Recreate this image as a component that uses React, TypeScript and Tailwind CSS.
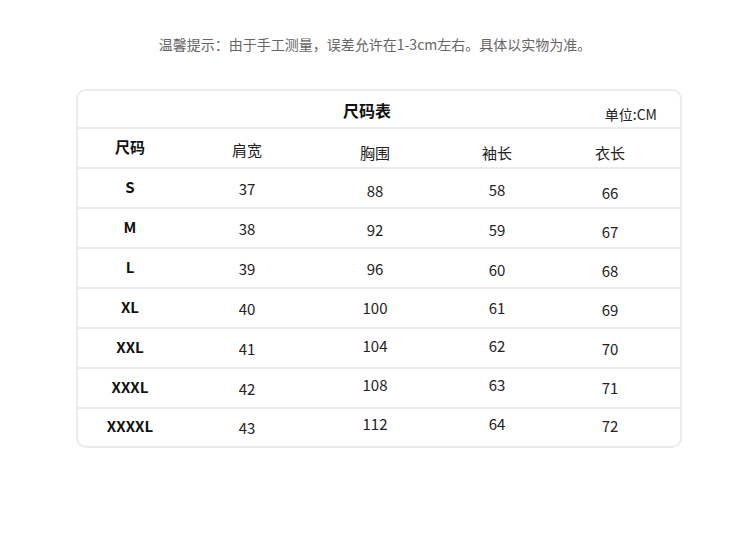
const shift: Record<number, string> = {
  [-3]: '-translate-y-[3px]',
  [-2]: '-translate-y-[2px]',
  [-1]: '-translate-y-[1px]',
  0: '',
  1: 'translate-y-[1px]',
  2: 'translate-y-[2px]',
  3: 'translate-y-[3px]',
  4: 'translate-y-[4px]',
  5: 'translate-y-[5px]',
};

const columns = ['w-[104px]', 'w-[130px]', 'w-[126px]', 'w-[118px]', 'w-[108px]'];

const header = { cells: ['尺码', '肩宽', '胸围', '袖长', '衣长'], offsets: [-1, 2, 5, 5, 5] };

const rows = [
  { cells: ['S', '37', '88', '58', '66'], offsets: [-1, 1, 3, 2, 5] },
  { cells: ['M', '38', '92', '59', '67'], offsets: [-1, 1, 2, 2, 4] },
  { cells: ['L', '39', '96', '60', '68'], offsets: [-1, 1, 1, 2, 3] },
  { cells: ['XL', '40', '100', '61', '69'], offsets: [-1, 1, 0, 0, 2] },
  { cells: ['XXL', '41', '104', '62', '70'], offsets: [-1, 1, -2, -2, 1] },
  { cells: ['XXXL', '42', '108', '63', '71'], offsets: [-1, 1, -3, -3, 0] },
  { cells: ['XXXXL', '43', '112', '64', '72'], offsets: [-1, 1, -3, -3, -1] },
];

const font = { fontFamily: '"Noto Sans CJK SC", "Noto Sans", sans-serif' };

export default function App() {
  return (
    <div className="w-[750px] h-[554px] bg-white" style={font}>
      <p className="pt-[34px] text-center text-[14px] leading-[20px] text-[#666666]">
        温馨提示：由于手工测量，误差允许在1-3cm左右。具体以实物为准。
      </p>

      <div className="mt-[35px] ml-[76px] w-[606px] rounded-[10px] border-2 border-[#ebebeb] overflow-hidden">
        <div className="flex items-center h-[36px]">
          <span className="ml-[265px] text-[16px] font-bold text-[#111111] translate-y-[1px]">尺码表</span>
          <span className="ml-auto mr-[23px] text-[14px] text-[#222222] translate-y-[5px]">单位:CM</span>
        </div>

        {[header, ...rows].map((row, r) => (
          <div
            key={r}
            className={`flex border-t-2 border-[#ebebeb] ${r === rows.length ? 'h-[39px]' : 'h-[40px]'}`}
          >
            {row.cells.map((cell, c) => (
              <div key={c} className={`${columns[c]} flex items-center justify-center`}>
                <span
                  className={`${shift[row.offsets[c]]} ${
                    c === 0
                      ? 'text-[15px] font-bold text-[#111111]'
                      : 'text-[15px] text-[#222222]'
                  }`}
                >
                  {cell}
                </span>
              </div>
            ))}
          </div>
        ))}
      </div>
    </div>
  );
}
